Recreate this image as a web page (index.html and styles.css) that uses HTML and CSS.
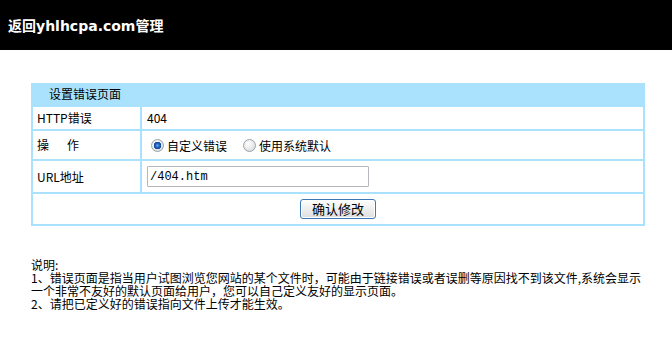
FILE: index.html
```
<!DOCTYPE html>
<html lang="zh-CN">
<head>
<meta charset="utf-8">
<title>设置错误页面</title>
<link rel="stylesheet" href="styles.css">
</head>
<body>
<div class="topbar"><a class="back" href="#">返回yhlhcpa.com管理</a></div>
<form class="panel">
<table class="errtable">
<tr class="r-head"><td colspan="2">设置错误页面</td></tr>
<tr class="r1"><td class="lbl">HTTP错误</td><td class="val">404</td></tr>
<tr class="r2"><td class="lbl"><span class="spread">操作</span></td><td class="val"><label class="opt"><input class="radio" type="radio" name="mode" checked>自定义错误</label><label class="opt opt2"><input class="radio" type="radio" name="mode">使用系统默认</label></td></tr>
<tr class="r3"><td class="lbl">URL地址</td><td class="val"><input class="url" type="text" value="/404.htm"></td></tr>
<tr class="r4"><td colspan="2" class="act"><button class="btn" type="button">确认修改</button></td></tr>
</table>
</form>
<div class="notes">
<p>说明:</p>
<p>1、错误页面是指当用户试图浏览您网站的某个文件时，可能由于链接错误或者误删等原因找不到该文件,系统会显示一个非常不友好的默认页面给用户，您可以自己定义友好的显示页面。</p>
<p>2、请把已定义好的错误指向文件上传才能生效。</p>
</div>
</body>
</html>
```
FILE: styles.css
```
* { box-sizing: border-box; }
body {
  margin: 0;
  background: #fff;
  color: #000;
  font: 12px/14px "Noto Sans CJK SC", sans-serif;
}
.topbar {
  background: #000;
  height: 50px;
  padding: 18px 0 0 8px;
}
.back {
  color: #fff;
  text-decoration: none;
  font: bold 14px/16px "DejaVu Sans", "Noto Sans CJK SC", sans-serif;
}
.panel {
  margin: 33px 0 0 31px;
  width: 614px;
}
.errtable {
  width: 614px;
  border-spacing: 2px;
  background: #aae2fe;
}
.errtable td {
  background: #fff;
  padding: 0 0 0 5px;
  vertical-align: middle;
}
.r-head td {
  background: #aae2fe;
  height: 20px;
  padding: 0 0 2px 16px;
}
.errtable td.lbl {
  width: 107px;
  padding-left: 4px;
}
.r1 td { height: 22px; }
.r2 td { height: 28px; }
.r3 td { height: 31px; }
.r4 td { height: 30px; }
.spread { letter-spacing: 18px; }
.opt {
  display: inline-flex;
  align-items: center;
  vertical-align: middle;
}
.opt2 { margin-left: 12px; }
.radio {
  appearance: none;
  -webkit-appearance: none;
  width: 13px;
  height: 13px;
  margin: 0 3px 0 4px;
  border: 1px solid #97a3ad;
  border-radius: 50%;
  background: radial-gradient(circle at 40% 35%, #ffffff 0, #ececec 45%, #cfd3d6 100%);
}
.radio:checked {
  background:
    radial-gradient(circle at 50% 50%, #7fb4ec 0, #2c6ec8 1.5px, #0d4596 3.5px, rgba(13,69,150,0) 4px),
    radial-gradient(circle at 40% 35%, #ffffff 0, #ececec 45%, #cfd3d6 100%);
}
.url {
  width: 222px;
  height: 21px;
  border: 1px solid #b4b8bd;
  border-radius: 1px;
  padding: 0 2px;
  font: 12px "Liberation Mono", monospace;
  color: #000;
  background: #fff;
  vertical-align: middle;
}
.errtable td.act {
  text-align: center;
  padding: 0;
}
.btn {
  width: 76px;
  height: 20px;
  padding: 0;
  border: 1px solid #3a78b6;
  border-radius: 3px;
  background: linear-gradient(#fefefe, #f0f0f0 45%, #dedede);
  box-shadow: inset 0 0 0 1px #ffffff;
  font: 13px/16px "Noto Sans CJK SC", sans-serif;
  color: #000;
  vertical-align: middle;
}
.notes {
  margin: 32px 0 0 31px;
  width: 614px;
  line-height: 13px;
}
.notes p { margin: 0; }
```
